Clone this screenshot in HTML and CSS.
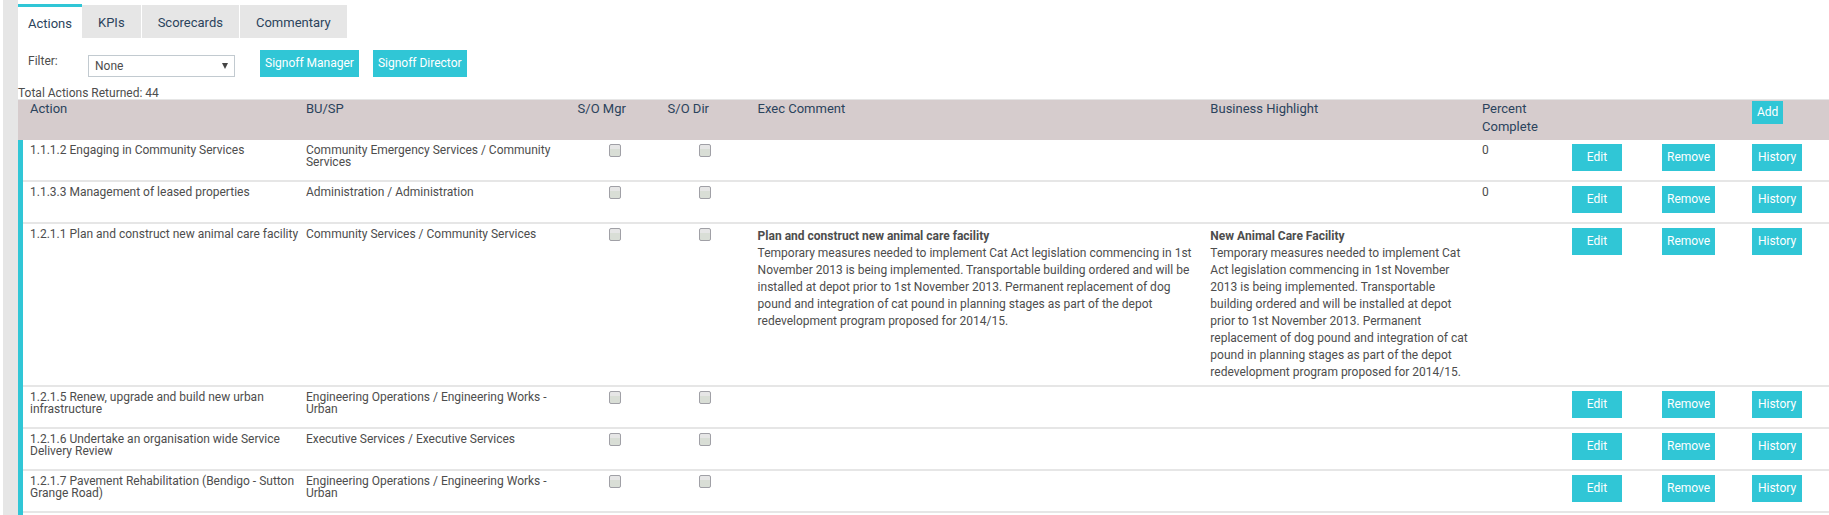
FILE: index.html
```html
<!DOCTYPE html>
<html lang="en">
<head>
  <meta charset="UTF-8">
  <title>Actions</title>
  <meta name="viewport" content="width=device-width, initial-scale=1.0">
  <link rel="stylesheet" href="styles.css">
</head>
<body>

<div class="page">
  <!-- TABS -->
  <nav class="tabs">
    <a href="#actions" class="tab active">Actions</a>
    <a href="#kpis" class="tab">KPIs</a>
    <a href="#scorecards" class="tab">Scorecards</a>
    <a href="#commentary" class="tab">Commentary</a>
  </nav>

  <!-- FILTER BAR -->
  <div class="filter-bar">
    <label for="filter">Filter:</label>
    <div class="select-box">
      <select id="filter">
        <option>None</option>
      </select>
    </div>
    <button type="button" class="btn">Signoff Manager</button>
    <button type="button" class="btn">Signoff Director</button>
  </div>

  <div class="total">Total Actions Returned: 44</div>

  <!-- ACTIONS TABLE -->
  <table class="actions">
    <colgroup>
      <col>
      <col class="col-medium">
      <col class="col-small">
      <col class="col-small">
      <col class="col-large">
      <col class="col-medium">
      <col class="col-small">
      <col class="col-small">
      <col class="col-small">
      <col class="col-last">
    </colgroup>
    <thead>
      <tr>
        <th>Action</th>
        <th>BU/SP</th>
        <th>S/O Mgr</th>
        <th>S/O Dir</th>
        <th>Exec Comment</th>
        <th>Business Highlight</th>
        <th>Percent Complete</th>
        <th></th>
        <th></th>
        <th><button type="button" class="btn btn-add">Add</button></th>
      </tr>
    </thead>
    <tbody>
      <tr>
        <td>1.1.1.2 Engaging in Community Services</td>
        <td>Community Emergency Services / Community Services</td>
        <td class="check"><input type="checkbox" aria-label="S/O Mgr 1.1.1.2"></td>
        <td class="check"><input type="checkbox" aria-label="S/O Dir 1.1.1.2"></td>
        <td></td>
        <td></td>
        <td>0</td>
        <td><button type="button" class="btn btn-row">Edit</button></td>
        <td><button type="button" class="btn btn-row">Remove</button></td>
        <td><button type="button" class="btn btn-row">History</button></td>
      </tr>
      <tr>
        <td>1.1.3.3 Management of leased properties</td>
        <td>Administration / Administration</td>
        <td class="check"><input type="checkbox" aria-label="S/O Mgr 1.1.3.3"></td>
        <td class="check"><input type="checkbox" aria-label="S/O Dir 1.1.3.3"></td>
        <td></td>
        <td></td>
        <td>0</td>
        <td><button type="button" class="btn btn-row">Edit</button></td>
        <td><button type="button" class="btn btn-row">Remove</button></td>
        <td><button type="button" class="btn btn-row">History</button></td>
      </tr>
      <tr>
        <td>1.2.1.1 Plan and construct new animal care facility</td>
        <td>Community Services / Community Services</td>
        <td class="check"><input type="checkbox" aria-label="S/O Mgr 1.2.1.1"></td>
        <td class="check"><input type="checkbox" aria-label="S/O Dir 1.2.1.1"></td>
        <td class="comment"><strong>Plan and construct new animal care facility</strong><br>Temporary measures needed to implement Cat Act legislation commencing in 1st November 2013 is being implemented. Transportable building ordered and will be installed at depot prior to 1st November 2013. Permanent replacement of dog pound and integration of cat pound in planning stages as part of the depot redevelopment program proposed for 2014/15.</td>
        <td class="comment"><strong>New Animal Care Facility</strong><br>Temporary measures needed to implement Cat Act legislation commencing in 1st November 2013 is being implemented. Transportable building ordered and will be installed at depot prior to 1st November 2013. Permanent replacement of dog pound and integration of cat pound in planning stages as part of the depot redevelopment program proposed for 2014/15.</td>
        <td></td>
        <td><button type="button" class="btn btn-row">Edit</button></td>
        <td><button type="button" class="btn btn-row">Remove</button></td>
        <td><button type="button" class="btn btn-row">History</button></td>
      </tr>
      <tr>
        <td>1.2.1.5 Renew, upgrade and build new urban infrastructure</td>
        <td>Engineering Operations / Engineering Works - Urban</td>
        <td class="check"><input type="checkbox" aria-label="S/O Mgr 1.2.1.5"></td>
        <td class="check"><input type="checkbox" aria-label="S/O Dir 1.2.1.5"></td>
        <td></td>
        <td></td>
        <td></td>
        <td><button type="button" class="btn btn-row">Edit</button></td>
        <td><button type="button" class="btn btn-row">Remove</button></td>
        <td><button type="button" class="btn btn-row">History</button></td>
      </tr>
      <tr>
        <td>1.2.1.6 Undertake an organisation wide Service Delivery Review</td>
        <td>Executive Services / Executive Services</td>
        <td class="check"><input type="checkbox" aria-label="S/O Mgr 1.2.1.6"></td>
        <td class="check"><input type="checkbox" aria-label="S/O Dir 1.2.1.6"></td>
        <td></td>
        <td></td>
        <td></td>
        <td><button type="button" class="btn btn-row">Edit</button></td>
        <td><button type="button" class="btn btn-row">Remove</button></td>
        <td><button type="button" class="btn btn-row">History</button></td>
      </tr>
      <tr>
        <td>1.2.1.7 Pavement Rehabilitation (Bendigo - Sutton Grange Road)</td>
        <td>Engineering Operations / Engineering Works - Urban</td>
        <td class="check"><input type="checkbox" aria-label="S/O Mgr 1.2.1.7"></td>
        <td class="check"><input type="checkbox" aria-label="S/O Dir 1.2.1.7"></td>
        <td></td>
        <td></td>
        <td></td>
        <td><button type="button" class="btn btn-row">Edit</button></td>
        <td><button type="button" class="btn btn-row">Remove</button></td>
        <td><button type="button" class="btn btn-row">History</button></td>
      </tr>
    </tbody>
    <tfoot>
      <tr><td colspan="10" class="table-end"></td></tr>
    </tfoot>
  </table>
</div>

</body>
</html>
```
FILE: styles.css
```css
* {
  box-sizing: border-box;
}

body {
  margin: 0;
  padding-left: 3px;
  font-family: Roboto, Arial, sans-serif;
  font-size: 12px;
  color: #4d4d4d;
  background: #fff;
}

.page {
  min-height: 100vh;
  border-left: 15px solid #e6e6e6;
  padding-top: 4px;
}

/* Tabs */
.tabs {
  display: flex;
  align-items: flex-start;
  gap: 1px;
  height: 34px;
}

.tab {
  margin-top: 1px;
  padding: 2px 16px 0;
  line-height: 31px;
  font-size: 13px;
  color: #2b435c;
  background: #e6e6e6;
  text-decoration: none;
}

.tab.active {
  margin: 0 -1px 0 0;
  padding: 1px 10px 0;
  border-top: 3px solid #30c6d6;
  background: #fff;
}

/* Filter bar */
.filter-bar {
  display: flex;
  align-items: flex-start;
  padding: 12px 10px 0;
}

.filter-bar label {
  width: 60px;
  line-height: 22px;
}

.select-box {
  position: relative;
  width: 147px;
  margin: 5px 25px 0 0;
}

.select-box::after {
  content: "";
  position: absolute;
  top: 8px;
  right: 7px;
  border: 3px solid transparent;
  border-top: 6px solid #444;
  border-bottom: 0;
  pointer-events: none;
}

.select-box select {
  appearance: none;
  display: block;
  width: 100%;
  height: 22px;
  padding: 0 6px;
  border: 1px solid #c2cad0;
  border-radius: 0;
  background: #fff;
  color: #4d4d4d;
  font-family: inherit;
  font-size: 12px;
}

.btn {
  display: block;
  height: 27px;
  padding: 0 5px 2px;
  border: none;
  background: #30c6d6;
  color: #fff;
  font-family: inherit;
  font-size: 12px;
  cursor: pointer;
}

.filter-bar .btn {
  margin-right: 14px;
}

.total {
  padding-top: 10px;
  line-height: 12px;
}

/* Actions table */
.actions {
  width: 100%;
  table-layout: fixed;
  border-collapse: collapse;
}

.col-small {
  width: 90px;
}

.col-medium {
  width: 15%;
}

.col-large {
  width: 25%;
}

.col-last {
  width: 84px;
}

.actions th {
  height: 41px;
  padding: 1px 7px 0;
  background: #d6cccd;
  box-shadow: inset 0 1px 0 #e6e6e6;
  color: #2b435c;
  font-size: 13px;
  font-weight: normal;
  line-height: 18px;
  text-align: left;
  vertical-align: top;
}

.actions td {
  height: 42px;
  padding: 4px 7px 6px;
  box-shadow: inset 0 -2px 0 #e6e6e6;
  line-height: 12px;
  vertical-align: top;
}

.actions th:first-child,
.actions td:first-child {
  padding-left: 12px;
}

.actions td:first-child {
  padding-right: 0;
  box-shadow: inset 5px 0 0 #30c6d6, inset 0 -2px 0 #e6e6e6;
}

.actions td.comment {
  line-height: 17px;
}

.actions td.check {
  padding-left: 38px;
}

.actions tfoot td.table-end {
  height: 2px;
  padding: 0;
  box-shadow: inset 5px 0 0 #30c6d6;
}

.check input {
  appearance: none;
  display: block;
  width: 12px;
  height: 13px;
  margin: 0;
  border: 1px solid #a0a0a6;
  border-radius: 2px;
  background: linear-gradient(#e6e6e6 35%, #d9ded6 35%);
}

.btn-row {
  min-width: 50px;
}

.btn-add {
  height: 23px;
  margin-top: 1px;
}
```
